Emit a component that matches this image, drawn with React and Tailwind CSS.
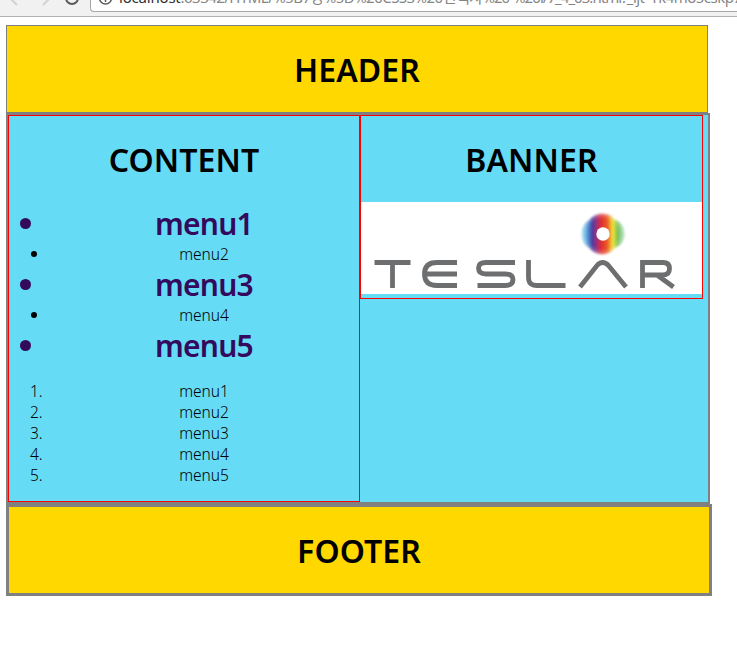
const heading = "text-center text-[32px] font-semibold leading-[43px] tracking-[0.1px] text-black";

function BigItem({ children }) {
  return (
    <li className="flex h-10 items-center text-[#330a5c]">
      <span className="-mt-[2px] ml-[11px] h-[11px] w-[11px] rounded-full bg-[#330a5c]" />
      <span className="ml-[21px] mr-[3px] flex-1 text-center text-[30px] font-semibold leading-10 tracking-[-0.8px]">{children}</span>
    </li>
  );
}

function SmallItem({ children }) {
  return (
    <li className="flex h-[21px] items-center">
      <span className="-mt-[2px] ml-[22px] h-[6px] w-[6px] rounded-full bg-black" />
      <span className="-mt-px ml-[14px] mr-[2px] flex-1 text-center">{children}</span>
    </li>
  );
}

function Teslar() {
  return (
    <svg className="block h-[92px] w-[341px]" viewBox="361 202 341 92">
      <defs>
        <linearGradient id="spectrum" x1="0" x2="1">
          <stop offset="0" stopColor="#8fd5f2" />
          <stop offset=".13" stopColor="#4f9fda" />
          <stop offset=".25" stopColor="#4a3b9f" />
          <stop offset=".36" stopColor="#a52c78" />
          <stop offset=".46" stopColor="#e0302f" />
          <stop offset=".6" stopColor="#ea5a28" />
          <stop offset=".73" stopColor="#f2e53a" />
          <stop offset=".85" stopColor="#6fbd55" />
          <stop offset="1" stopColor="#8fd3a4" />
        </linearGradient>
        <radialGradient id="haze">
          <stop offset=".7" stopColor="#fff" stopOpacity="0" />
          <stop offset="1" stopColor="#fff" stopOpacity=".45" />
        </radialGradient>
        <filter id="soft"><feGaussianBlur stdDeviation=".8" /></filter>
      </defs>
      <rect x="361" y="202" width="341" height="92" fill="#fff" />
      <g filter="url(#soft)">
        <path fill="url(#spectrum)" d="M602 213.500c6 0 10 2 13 6 6 2 9.500 8 9.500 14.500s-3.500 12-9.500 14c-3 4-7 6.500-13 6.500-5 0-10-2.500-13-6.500-5-3-7.500-8-7.500-14s2.500-11 7.500-14c3-4 8-6.500 13-6.500Z" />
        <circle cx="602.500" cy="234" r="22" fill="url(#haze)" />
      </g>
      <circle cx="603" cy="234" r="6.700" fill="#fff" />
      <g fill="none" stroke="#6d6e70" strokeWidth="4.800">
        <path d="M374.500 262.500H410.500M392.500 262.500V288" />
        <path d="M457 262.500H437C428 262.500 424.500 267 424.500 274S428 285.500 437 285.500H457M425 274H457" />
        <path d="M515 262.500H486C480 262.500 478.500 265 478.500 268S480 274 486 274H505C511 274 513 276 513 279.500S511 285.500 505 285.500H477.500" />
        <path d="M528.500 260V277C528.500 283 531 285.500 537 285.500H565.500" />
        <path d="M580 287L597 265.500Q602.500 259.500 608.500 265.500L626 287" />
        <path d="M642.500 288V262.500H663C668 262.500 669.500 265 669.500 268.500S668 275 663 275H643M657 275L673.500 287" />
      </g>
    </svg>
  );
}

export default function App() {
  return (
    <div className="h-[654px] w-[737px] overflow-hidden bg-white font-['Noto_Sans','Noto_Sans_CJK_KR',sans-serif] text-[15px] leading-[21px] text-black">
      <div className="flex h-[17px] overflow-hidden border-b border-[#b2b2b2] bg-[#f1f1f1]">
        <svg className="h-4 w-[90px] shrink-0" viewBox="0 0 90 16" fill="none" strokeWidth="2">
          <path d="M17 -7L11-1L17 5M43-7L49-1L43 5" stroke="#d2d2d2" />
          <circle cx="72" cy="-2" r="6" stroke="#5a5a5a" />
        </svg>
        <div className="flex h-3 flex-1 rounded-bl border-b border-l border-[#a6a6a6] bg-white">
          <svg className="ml-2 h-3 w-4 shrink-0" viewBox="0 0 16 12" fill="none" stroke="#5a5a5a" strokeWidth="1.500">
            <circle cx="6.500" cy="-2" r="6" /><path d="M6.500-3V2" />
          </svg>
          <span className="-mt-[13px] ml-1 whitespace-nowrap text-[15px] leading-[21px] tracking-[-0.53px] text-[#858585]">
            <span className="tracking-[-0.2px] text-[#303030]">localhost</span>:63342/HTML/%5B7장%5D%20CSS3%20선택자<span className="tracking-[-0.95px]">%20-%20l/7_4_03.html?</span>_ijt=rk4mo5cskp7t
          </span>
        </div>
      </div>
      <div className="ml-[6px] mt-2">
        <header className="h-[88px] w-[702px] border border-[#808080] bg-[#ffd800] pt-[22px]">
          <h1 className={heading}>HEADER</h1>
        </header>
        <main className="flex h-[391px] w-[704px] items-start border-2 border-[#808080] bg-[#66dbf6]">
          <section className="h-[387px] w-[352px] border border-[#f00] pt-[22px]">
            <h1 className={heading}>CONTENT</h1>
            <ul className="mt-[23px] text-[15.500px] font-light">
              <BigItem>menu1</BigItem>
              <SmallItem>menu2</SmallItem>
              <BigItem>menu3</BigItem>
              <SmallItem>menu4</SmallItem>
              <BigItem>menu5</BigItem>
            </ul>
            <ol className="mt-[15px] text-[15.500px] font-light">
              {[1, 2, 3, 4, 5].map((n) => (
                <li key={n} className="flex">
                  <span className="ml-[21px] w-[21px]">{n}.</span>
                  <span className="mr-[2px] flex-1 text-center">menu{n}</span>
                </li>
              ))}
            </ol>
          </section>
          <section className="h-[184px] w-[343px] border border-[#f00] pt-[22px]">
            <h1 className={heading}>BANNER</h1>
            <div className="mt-[21px]"><Teslar /></div>
          </section>
        </main>
        <footer className="h-[92px] w-[706px] border-[3px] border-[#808080] bg-[#ffd800] pt-[22px]">
          <h1 className={heading}>FOOTER</h1>
        </footer>
      </div>
    </div>
  );
}
